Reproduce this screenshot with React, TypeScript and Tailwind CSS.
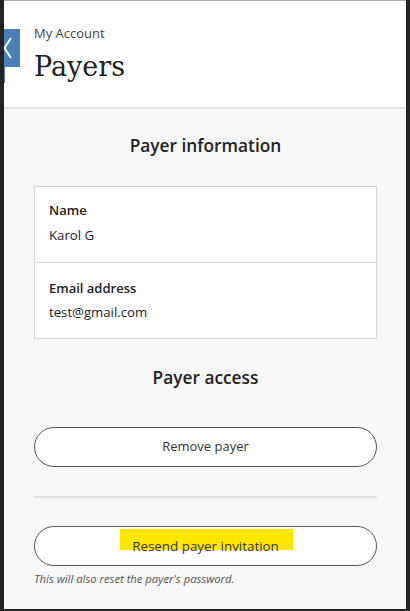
export default function App() {
  return (
    <div className="w-[410px] h-[611px] bg-[#222222] pl-[4px] pr-[4px] pb-[2px] font-['Open_Sans',sans-serif] text-[#333333]">
      <div className="h-full bg-[#f7f7f7] border-t border-[#aaaaaa] flex flex-col">
        {/* Header */}
        <header className="relative h-[108px] bg-white border-b-2 border-[#e2e2e2] pl-[30px] pt-[23px]">
          <div className="absolute left-0 top-[28px] w-[16px] h-[38px] bg-[#4a80b8]">
            <svg width="16" height="38" viewBox="0 0 16 38">
              <polyline points="7,9 0.5,19 7,29" fill="none" stroke="#ffffff" strokeWidth="1.8" />
            </svg>
          </div>
          <div className="absolute left-0 top-[66px] w-[1px] h-[16px] bg-[#4a80b8]" />
          <p className="text-[13px] leading-[18px] text-[#444]">My Account</p>
          <h1 className="mt-[8px] text-[27px] leading-[34px] text-[#222] font-['DejaVu_Serif',serif]">Payers</h1>
        </header>

        <main className="px-[30px] pr-[29px]">
          <h2 className="mt-[25px] text-center text-[17.3px] leading-[24px] font-semibold text-[#222]">
            Payer information
          </h2>

          <div className="mt-[28px] bg-white border border-[#d6d6d6]">
            <div className="px-[14px] pt-[14px] pb-[18px] border-b border-[#d6d6d6]">
              <p className="text-[13px] leading-[18px] font-semibold text-[#222]">Name</p>
              <p className="mt-[7px] text-[13.2px] leading-[18px] text-[#222]">Karol G</p>
            </div>
            <div className="px-[14px] pt-[16px] pb-[17px]">
              <p className="text-[13px] leading-[18px] font-semibold text-[#222]">Email address</p>
              <p className="mt-[6px] text-[13.2px] leading-[18px] text-[#222]">test@gmail.com</p>
            </div>
          </div>

          <h2 className="mt-[27px] text-center text-[17.3px] leading-[24px] font-semibold text-[#222]">
            Payer access
          </h2>

          <button className="mt-[37px] w-full h-[40px] rounded-full bg-white border border-[#555] text-[13px] text-[#333]">
            Remove payer
          </button>

          <hr className="mt-[29px] border-0 border-t-2 border-[#e0e0e0]" />

          <button className="relative mt-[28px] w-full h-[40px] rounded-full bg-white border border-[#555] text-[13.4px] leading-[16px] text-[#333] flex items-center justify-center">
            <span className="absolute left-[85px] top-[2px] w-[173px] h-[21px] bg-[#ffe600]" />
            <span className="relative">Resend payer invitation</span>
          </button>

          <p className="mt-[5px] text-[11.25px] leading-[16px] italic text-[#555]">
            This will also reset the payer's password.
          </p>
        </main>
      </div>
    </div>
  );
}
